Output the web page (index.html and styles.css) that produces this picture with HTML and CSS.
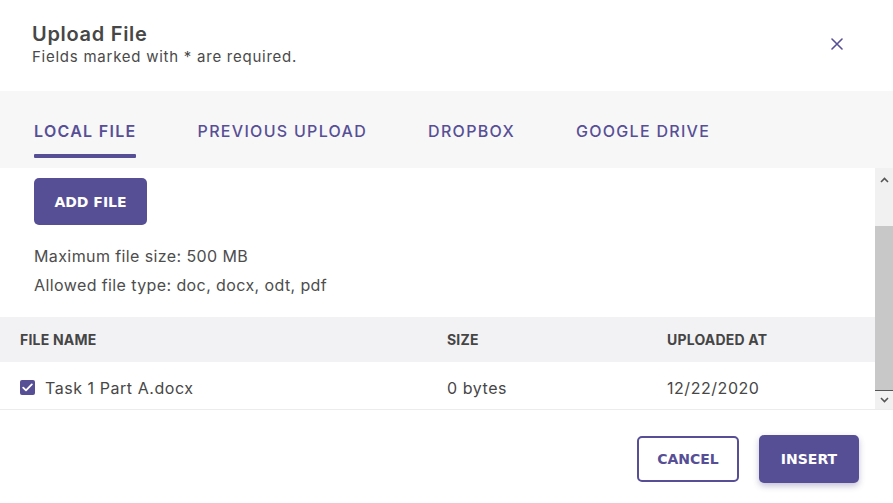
FILE: index.html
```html
<!DOCTYPE html>
<html lang="en">
<head>
<meta charset="utf-8">
<title>Upload File</title>
<link rel="stylesheet" href="styles.css">
</head>
<body>
<div class="dialog">
  <header class="head">
    <div class="head-text">
      <h1 class="title">Upload File</h1>
      <p class="subtitle">Fields marked with * are required.</p>
    </div>
    <button class="close" aria-label="Close">
      <svg width="12" height="12" viewBox="0 0 12 12"><path d="M1 1L11 11M11 1L1 11" stroke="#574f96" stroke-width="1.6" stroke-linecap="round"/></svg>
    </button>
  </header>
  <nav class="tabs">
    <span class="tab active">LOCAL FILE</span>
    <span class="tab">PREVIOUS UPLOAD</span>
    <span class="tab">DROPBOX</span>
    <span class="tab">GOOGLE DRIVE</span>
  </nav>
  <div class="scroller">
    <div class="content">
      <div class="upload">
        <button class="btn btn-fill btn-add">ADD FILE</button>
        <p class="info">Maximum file size: 500 MB</p>
        <p class="info">Allowed file type: doc, docx, odt, pdf</p>
      </div>
      <div class="table">
        <div class="trow thead">
          <span>FILE NAME</span>
          <span>SIZE</span>
          <span>UPLOADED AT</span>
        </div>
        <div class="trow tbody">
          <span class="namecell">
            <span class="check">
              <svg width="11" height="9" viewBox="0 0 11 9"><path d="M1.2 4.6L4 7.3L9.8 1.4" fill="none" stroke="#fff" stroke-width="1.8" stroke-linecap="round" stroke-linejoin="round"/></svg>
            </span>
            Task 1 Part A.docx
          </span>
          <span>0 bytes</span>
          <span>12/22/2020</span>
        </div>
      </div>
    </div>
    <div class="scrollbar">
      <div class="sb-btn">
        <svg width="9" height="6" viewBox="0 0 9 6"><path d="M1 5L4.5 1.5L8 5" fill="none" stroke="#555" stroke-width="1.6"/></svg>
      </div>
      <div class="sb-gap"></div>
      <div class="sb-thumb"></div>
      <div class="sb-btn sb-down">
        <svg width="9" height="6" viewBox="0 0 9 6"><path d="M1 1L4.5 4.5L8 1" fill="none" stroke="#555" stroke-width="1.6"/></svg>
      </div>
    </div>
  </div>
  <footer class="foot">
    <button class="btn btn-outline">CANCEL</button>
    <button class="btn btn-fill btn-insert">INSERT</button>
  </footer>
</div>
</body>
</html>
```
FILE: styles.css
```css
* { box-sizing: border-box; }
html, body { margin: 0; padding: 0; background: #fff; }
body {
  font-family: Inter, "Noto Sans", sans-serif;
  color: #474747;
  width: 893px;
  height: 503px;
  overflow: hidden;
}
.dialog { display: flex; flex-direction: column; height: 503px; }

.head {
  height: 91px;
  display: flex;
  align-items: flex-start;
  justify-content: space-between;
  padding: 22px 50px 0 32px;
}
.title {
  margin: 0;
  font-size: 20px;
  font-weight: 600;
  line-height: 24px;
  letter-spacing: 0.7px;
  color: #474747;
}
.subtitle {
  margin: 0;
  font-size: 15px;
  line-height: 22px;
  letter-spacing: 0.75px;
  color: #4a4a4a;
}
.close {
  border: 0;
  background: none;
  padding: 0;
  margin-top: 16px;
  width: 12px;
  height: 12px;
  display: flex;
}

.tabs {
  height: 77px;
  background: #f7f7f8;
  display: flex;
  align-items: stretch;
  gap: 61px;
  padding: 0 34px;
}
.tab {
  font-size: 16px;
  font-weight: 500;
  letter-spacing: 1.3px;
  color: #574f96;
  display: flex;
  align-items: center;
  padding-top: 2px;
  position: relative;
}
.tab.active { font-weight: 600; }
.tab.active::after {
  content: "";
  position: absolute;
  left: 0;
  right: 1px;
  bottom: 10px;
  height: 4px;
  background: #574f96;
  border-radius: 1px;
}

.scroller {
  height: 242px;
  display: flex;
  border-bottom: 1px solid #ececec;
  overflow: hidden;
}
.content { flex: 1; overflow: hidden; }
.upload { padding: 10px 34px 0; }
.info {
  margin: 0;
  font-size: 16px;
  line-height: 29px;
  letter-spacing: 0.4px;
  color: #4d4d4d;
}
.btn-add { margin-bottom: 17px; width: 113px; height: 47px; }

.table { margin-top: 17px; }
.trow {
  display: grid;
  grid-template-columns: 427px 220px 1fr;
  align-items: center;
  padding-left: 20px;
}
.thead {
  height: 45px;
  background: #f2f2f4;
  font-size: 14px;
  font-weight: 700;
  letter-spacing: 0.2px;
  color: #454545;
}
.tbody {
  height: 48px;
  padding-top: 3px;
  font-size: 16px;
  letter-spacing: 0.55px;
  color: #474747;
}
.namecell { display: flex; align-items: center; gap: 10px; }
.check {
  width: 15px;
  height: 15px;
  border-radius: 2px;
  background: #574f96;
  display: flex;
  align-items: center;
  justify-content: center;
}

.scrollbar {
  width: 18px;
  background: #f1f1f1;
  display: flex;
  flex-direction: column;
}
.sb-btn {
  height: 20px;
  display: flex;
  align-items: center;
  justify-content: center;
  padding-top: 4px;
}
.sb-down { padding-top: 0; height: 19px; border-top: 1px solid #555; }
.sb-gap { height: 38px; }
.sb-thumb { flex: 1; background: #c8c8c8; }

.foot {
  flex: 1;
  display: flex;
  justify-content: flex-end;
  align-items: center;
  gap: 20px;
  padding: 4px 34px 0 0;
}
.btn {
  font-family: "DejaVu Sans", Verdana, sans-serif;
  font-weight: 700;
  font-size: 14px;
  border-radius: 5px;
  cursor: pointer;
  display: flex;
  align-items: center;
  justify-content: center;
  padding: 0;
}
.btn-fill {
  background: #574f96;
  color: #fff;
  border: 0;
}
.btn-outline {
  width: 102px;
  height: 46px;
  background: #fff;
  color: #574f96;
  border: 2px solid #574f96;
}
.btn-insert {
  width: 100px;
  height: 48px;
  box-shadow: 0 3px 6px rgba(60, 50, 120, 0.3);
}
```
